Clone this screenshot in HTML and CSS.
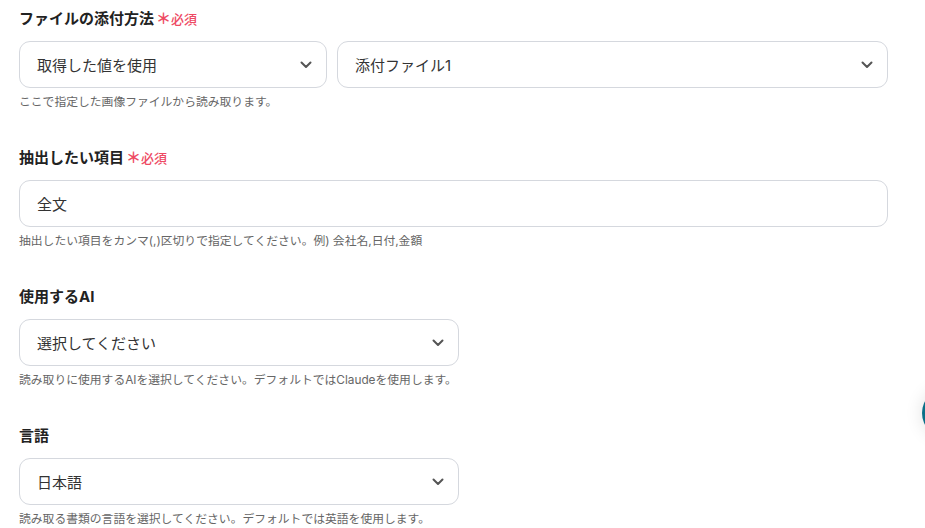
FILE: index.html
```html
<!DOCTYPE html>
<html lang="ja">
<head>
<meta charset="utf-8">
<link rel="stylesheet" href="styles.css">
</head>
<body>
<div class="form">
  <div class="field">
    <div class="label">ファイルの添付方法<span class="req"><span class="ast">＊</span>必須</span></div>
    <div class="row">
      <div class="control select w1"><span>取得した値を使用</span><svg class="chev" viewBox="0 0 12 8"><path d="M1.5 1.5 L6 6 L10.5 1.5"/></svg></div>
      <div class="control select w2"><span>添付ファイル1</span><svg class="chev" viewBox="0 0 12 8"><path d="M1.5 1.5 L6 6 L10.5 1.5"/></svg></div>
    </div>
    <div class="help">ここで指定した画像ファイルから読み取ります。</div>
  </div>
  <div class="field">
    <div class="label">抽出したい項目<span class="req"><span class="ast">＊</span>必須</span></div>
    <div class="control full"><span>全文</span></div>
    <div class="help">抽出したい項目をカンマ(,)区切りで指定してください。例) 会社名,日付,金額</div>
  </div>
  <div class="field">
    <div class="label">使用するAI</div>
    <div class="control select half"><span>選択してください</span><svg class="chev" viewBox="0 0 12 8"><path d="M1.5 1.5 L6 6 L10.5 1.5"/></svg></div>
    <div class="help">読み取りに使用するAIを選択してください。デフォルトではClaudeを使用します。</div>
  </div>
  <div class="field">
    <div class="label">言語</div>
    <div class="control select half"><span>日本語</span><svg class="chev" viewBox="0 0 12 8"><path d="M1.5 1.5 L6 6 L10.5 1.5"/></svg></div>
    <div class="help">読み取る書類の言語を選択してください。デフォルトでは英語を使用します。</div>
  </div>
</div>
<div class="fab"></div>
</body>
</html>
```
FILE: styles.css
```css
html, body {
  margin: 0;
  padding: 0;
  background: #ffffff;
  overflow: hidden;
}
body {
  font-family: Inter, "Noto Sans CJK JP", "Noto Sans", sans-serif;
  color: #2b2b2b;
  width: 925px;
  height: 528px;
  position: relative;
}
.form {
  padding: 9px 0 0 19px;
  display: flex;
  flex-direction: column;
  gap: 38px;
}
.field {
  display: flex;
  flex-direction: column;
}
.label {
  font-size: 15px;
  font-weight: 700;
  line-height: 20px;
  height: 20px;
  margin-bottom: 12px;
  display: flex;
  align-items: center;
  color: #222;
}
.req {
  color: #ee4a64;
  font-size: 13px;
  font-weight: 500;
  margin-left: 2px;
  display: inline-flex;
  align-items: center;
}
.ast {
  font-size: 15px;
  font-weight: 700;
  margin-right: 0;
}
.row {
  display: flex;
  gap: 10px;
}
.control {
  box-sizing: border-box;
  height: 47px;
  border: 1px solid #d5d8de;
  border-radius: 11px;
  display: flex;
  align-items: center;
  justify-content: space-between;
  padding: 0 14px 0 17px;
  font-size: 15px;
  color: #333;
  background: #fff;
}
.w1 { width: 308px; }
.w2 { width: 551px; }
.full { width: 869px; }
.half { width: 440px; }
.chev {
  width: 12px;
  height: 8px;
  fill: none;
  stroke: #555;
  stroke-width: 2;
  stroke-linecap: round;
  stroke-linejoin: round;
}
.help {
  margin-top: 6px;
  font-size: 11.8px;
  line-height: 16px;
  color: #666;
}
.fab {
  position: absolute;
  left: 922px;
  top: 389px;
  width: 48px;
  height: 48px;
  border-radius: 50%;
  background: #0b6f88;
  box-shadow: 0 0 18px rgba(0, 0, 0, 0.12);
}
```
